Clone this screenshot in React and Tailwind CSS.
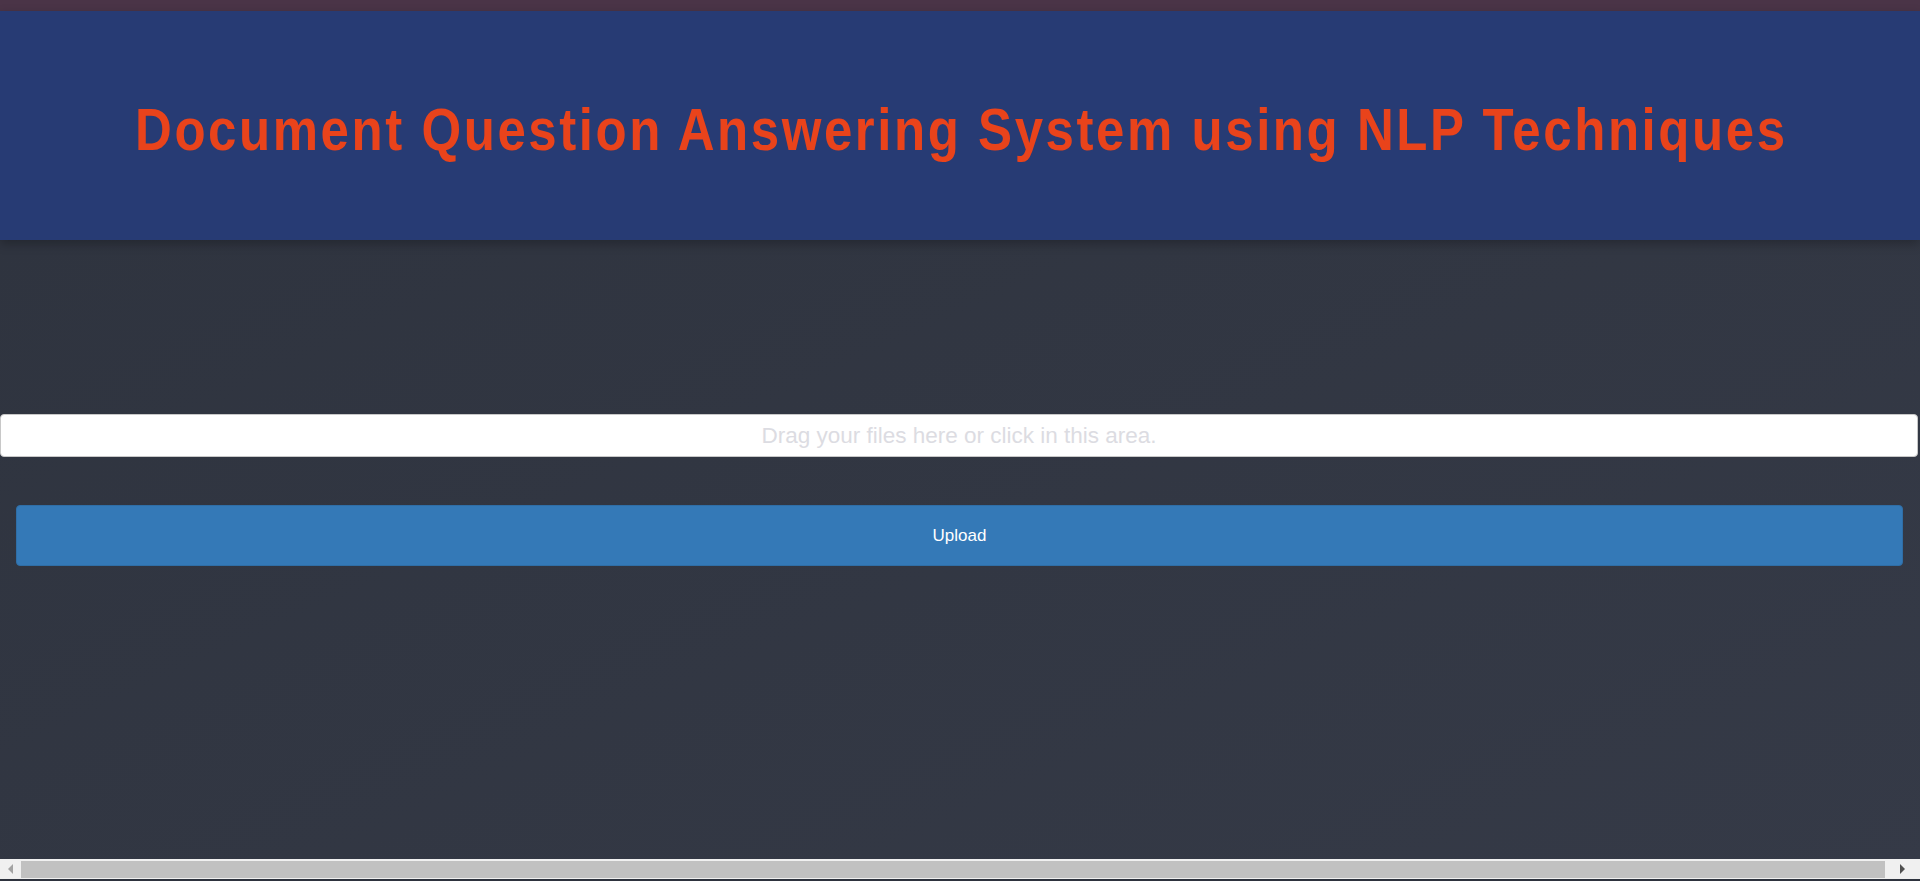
export default function App() {
    return (
        <div className="h-[881px] w-full flex flex-col overflow-hidden bg-gradient-to-br from-[#2e333e] to-[#353a47] font-['Liberation_Sans',Arial,sans-serif]">
            <div className="h-[11px] bg-[#4a3447]"></div>
            <header className="h-[229px] bg-[#273b74] flex items-center shadow-[0_4px_10px_rgba(0,0,0,0.25)] relative z-10">
                <div className="pl-[135px] pt-[8px]">
                    <h1 className="inline-block origin-left scale-x-[0.85] text-[#e9431b] text-[60px] font-bold tracking-[3px] whitespace-nowrap">
                        Document Question Answering System using NLP Techniques
                    </h1>
                </div>
            </header>
            <main className="flex-1 flex flex-col pt-[174px]">
                <div className="h-[43px] mr-[2px] bg-white border border-[#c8c8c8] rounded-[4px] flex items-center justify-center">
                    <span className="text-[#dcdce2] text-[22.5px]">Drag your files here or click in this area.</span>
                </div>
                <div className="mt-[48px] ml-[16px] mr-[17px]">
                    <button className="w-full h-[61px] bg-[#3479b7] rounded-[4px] text-white text-[17px] border border-[#2f6ea6]">
                        Upload
                    </button>
                </div>
            </main>
            <div className="h-[20px] bg-[#f0f0f0] flex items-center">
                <div className="w-[21px] flex justify-center">
                    <svg width="6" height="10" viewBox="0 0 6 10"><path d="M5 0 L0 5 L5 10 Z" fill="#a3a3a3" /></svg>
                </div>
                <div className="flex-1 h-[17px] bg-[#c1c1c1]"></div>
                <div className="w-[35px] flex justify-center">
                    <svg width="6" height="10" viewBox="0 0 6 10"><path d="M0 0 L5 5 L0 10 Z" fill="#505050" /></svg>
                </div>
            </div>
            <div className="h-[2px] bg-[#2e333e]"></div>
        </div>
    );
}
